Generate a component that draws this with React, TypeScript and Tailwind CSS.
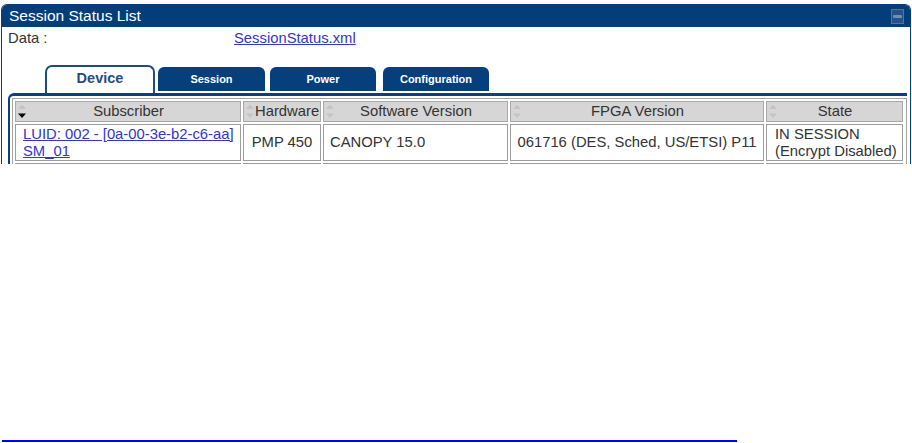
import React from "react";

const SortIcon = ({ active }: { active?: boolean }) => (
  <svg width="10" height="19" viewBox="0 0 10 19" className="shrink-0">
    <polygon points="1,7 5,2.5 9,7" fill="#c4c4c4" />
    <polygon points="1,11.5 5,16 9,11.5" fill={active ? "#000" : "#c4c4c4"} />
  </svg>
);

const headers = [
  { label: "Subscriber", w: "w-[226px]", active: true },
  { label: "Hardware", w: "w-[78px]" },
  { label: "Software Version", w: "w-[185px]" },
  { label: "FPGA Version", w: "w-[254px]" },
  { label: "State", w: "w-[137px]" },
];

export default function App() {
  return (
    <div
      className="w-[912px] h-[443px] bg-white flex flex-col overflow-hidden text-[#333]"
      style={{ fontFamily: '"Liberation Sans", Arial, sans-serif' }}
    >
      <div className="h-[164px] overflow-hidden shrink-0">
        <div className="mt-[4px] ml-[1px] w-[910px] h-[200px] border-x border-t border-[#0b3d78] rounded-t-[6px] overflow-hidden">
          {/* Title bar */}
          <div className="h-[22px] bg-[#033e7b] flex items-center justify-between pl-[7px] pr-[6px]">
            <span className="text-white text-[15.5px] leading-none">Session Status List</span>
            <div className="w-[13px] h-[15px] border border-[#52759f] bg-[#245289] flex items-center justify-center">
              <div className="w-[9px] h-[3px] bg-[#6f8db5] rounded-[1px]" />
            </div>
          </div>
          {/* Data row */}
          <div className="h-[21px] pl-[6px] pt-[2px] flex items-center text-[14.8px] leading-[17px]">
            <span className="w-[226px] text-[#333]">Data :</span>
            <a className="text-[#3434cf] underline">SessionStatus.xml</a>
          </div>
          {/* Tabs */}
          <div className="mt-[17px] pl-[43px] flex items-end h-[28px]">
            <div className="w-[110px] h-[28px] bg-white border-x-2 border-t-2 border-[#1e4c84] rounded-t-[7px] flex items-center justify-center pb-[3px]">
              <span className="font-bold text-[14.5px] text-[#294c7e]">Device</span>
            </div>
            <div className="ml-[3px] mb-[2px] w-[107px] h-[24px] bg-[#063f7c] rounded-t-[6px] flex items-center justify-center">
              <span className="font-bold text-[11px] text-white">Session</span>
            </div>
            <div className="ml-[5px] mb-[2px] w-[106px] h-[24px] bg-[#063f7c] rounded-t-[6px] flex items-center justify-center">
              <span className="font-bold text-[11px] text-white">Power</span>
            </div>
            <div className="ml-[7px] mb-[2px] w-[106px] h-[24px] bg-[#063f7c] rounded-t-[6px] flex items-center justify-center">
              <span className="font-bold text-[11px] text-white">Configuration</span>
            </div>
          </div>
          {/* Frame */}
          <div className="ml-[6px] w-[899px] border-t-[3px] border-l-2 border-[#0f3f7a] rounded-tl-[6px] pt-[2px] pl-[2px]">
            <div className="w-[895px] border border-[#a5a5a5] p-[2px] flex flex-col gap-[2px] text-[14.8px]">
              <div className="flex gap-[2px]">
                {headers.map((h) => (
                  <div
                    key={h.label}
                    className={`${h.w} h-[21px] bg-[#d6d6d6] border border-[#a8a8a8] flex items-center pl-[1px]`}
                  >
                    <SortIcon active={h.active} />
                    <span className="flex-1 text-center leading-none text-[#333] pr-[10px]">{h.label}</span>
                  </div>
                ))}
              </div>
              <div className="flex gap-[2px] leading-[17px]">
                <div className="w-[226px] h-[37px] border border-[#9d9d9d] flex flex-col justify-center pl-[7px]">
                  <a className="text-[#3434cf] underline">LUID: 002 - [0a-00-3e-b2-c6-aa]</a>
                  <a className="text-[#3434cf] underline">SM_01</a>
                </div>
                <div className="w-[78px] h-[37px] border border-[#9d9d9d] flex items-center justify-center">
                  PMP 450
                </div>
                <div className="w-[185px] h-[37px] border border-[#9d9d9d] flex items-center pl-[6px]">
                  CANOPY 15.0
                </div>
                <div className="w-[254px] h-[37px] border border-[#9d9d9d] flex items-center justify-center">
                  061716 (DES, Sched, US/ETSI) P11
                </div>
                <div className="w-[137px] h-[37px] border border-[#9d9d9d] flex flex-col justify-center pl-[8px]">
                  <span>IN SESSION</span>
                  <span>(Encrypt Disabled)</span>
                </div>
              </div>
              <div className="flex gap-[2px]">
                {headers.map((h) => (
                  <div key={h.label} className={`${h.w} h-[37px] border border-[#9d9d9d]`} />
                ))}
              </div>
            </div>
          </div>
        </div>
      </div>
      <div className="flex-1" />
      <div className="ml-[2px] mb-[1px] w-[735px] h-[2px] bg-[#0000f0]" />
    </div>
  );
}
